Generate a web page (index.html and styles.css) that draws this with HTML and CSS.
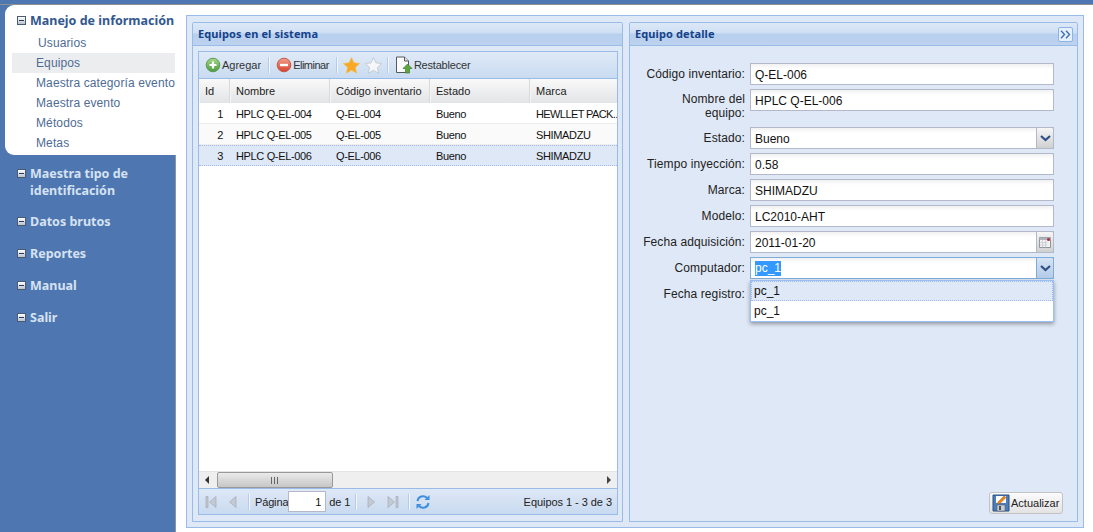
FILE: index.html
```html
<!DOCTYPE html>
<html lang="es">
<head>
    <meta charset="UTF-8">
    <title>Equipos</title>
    <link rel="stylesheet" href="styles.css">
</head>
<body>
    <div class="topbar"></div>
    <div class="app">
        <!-- Sidebar menu -->
        <nav class="sidebar">
            <div class="menu-open">
                <h3 class="menu-title dark"><span class="tree-box"></span>Manejo de información</h3>
                <a class="menu-item first">Usuarios</a>
                <a class="menu-item active">Equipos</a>
                <a class="menu-item">Maestra categoría evento</a>
                <a class="menu-item">Maestra evento</a>
                <a class="menu-item">Métodos</a>
                <a class="menu-item">Metas</a>
            </div>
            <h3 class="menu-title two-line"><span class="tree-box"></span>Maestra tipo de identificación</h3>
            <h3 class="menu-title"><span class="tree-box"></span>Datos brutos</h3>
            <h3 class="menu-title"><span class="tree-box"></span>Reportes</h3>
            <h3 class="menu-title"><span class="tree-box"></span>Manual</h3>
            <h3 class="menu-title"><span class="tree-box"></span>Salir</h3>
        </nav>

        <main class="main">
            <div class="container">
                <!-- Left: equipment grid -->
                <section class="panel panel-list">
                    <header class="panel-head">Equipos en el sistema</header>
                    <div class="panel-body">
                        <div class="grid">
                            <div class="toolbar">
                                <button class="tb-btn">
                                    <svg width="16" height="16" viewBox="0 0 16 16"><defs><linearGradient id="g1" x1="0" y1="0" x2="0" y2="1"><stop offset="0" stop-color="#a6d98c"/><stop offset="1" stop-color="#4a9a3a"/></linearGradient></defs><circle cx="8" cy="8" r="6.8" fill="url(#g1)" stroke="#5a9a58"/><path d="M8 4.500v7M4.500 8h7" stroke="#fff" stroke-width="2.200"/></svg>
                                    Agregar
                                </button>
                                <span class="tb-sep"></span>
                                <button class="tb-btn elim">
                                    <svg width="16" height="16" viewBox="0 0 16 16"><defs><linearGradient id="g2" x1="0" y1="0" x2="0" y2="1"><stop offset="0" stop-color="#f3a08c"/><stop offset="1" stop-color="#d8402c"/></linearGradient></defs><circle cx="8" cy="8" r="6.8" fill="url(#g2)" stroke="#c0584a"/><path d="M4 8h8" stroke="#fff" stroke-width="2.400"/></svg>
                                    Eliminar
                                </button>
                                <span class="tb-sep"></span>
                                <svg class="star" width="17" height="17" viewBox="0 0 16 16"><path d="M8 .5l2.300 5 5.400.6-4 3.700 1.100 5.400L8 12.500l-4.800 2.700 1.100-5.400-4-3.700 5.400-.6z" fill="#f9a825" stroke="#f2c14e" stroke-width=".6"/></svg>
                                <svg class="star" width="17" height="17" viewBox="0 0 16 16"><path d="M8 .5l2.300 5 5.400.6-4 3.700 1.100 5.400L8 12.500l-4.800 2.700 1.100-5.400-4-3.700 5.400-.6z" fill="#f4f6f8" stroke="#b9c1cc" stroke-width=".7"/></svg>
                                <span class="tb-sep"></span>
                                <button class="tb-btn reset">
                                    <svg width="18" height="18" viewBox="0 0 18 18"><path d="M1.500 1h8l4 4v11.500h-12z" fill="#fafafa" stroke="#55585c"/><path d="M9.500 1v4h4" fill="#dfe3e6" stroke="#55585c"/><path d="M12.500 8l4.500 4.500h-2.500V17h-4v-4.500H8z" fill="#5da53c" stroke="#3e7d28" stroke-width=".7"/></svg>
                                    Restablecer
                                </button>
                            </div>

                            <div class="row head">
                                <div class="cell c-id">Id</div>
                                <div class="cell c-wide">Nombre</div>
                                <div class="cell c-wide">Código inventario</div>
                                <div class="cell c-wide">Estado</div>
                                <div class="cell c-last">Marca</div>
                            </div>
                            <div class="rows">
                                <div class="row">
                                    <div class="cell c-id num">1</div>
                                    <div class="cell c-wide">HPLC Q-EL-004</div>
                                    <div class="cell c-wide">Q-EL-004</div>
                                    <div class="cell c-wide">Bueno</div>
                                    <div class="cell c-last squeeze">HEWLLET PACK..</div>
                                </div>
                                <div class="row alt">
                                    <div class="cell c-id num">2</div>
                                    <div class="cell c-wide">HPLC Q-EL-005</div>
                                    <div class="cell c-wide">Q-EL-005</div>
                                    <div class="cell c-wide">Bueno</div>
                                    <div class="cell c-last">SHIMADZU</div>
                                </div>
                                <div class="row selected">
                                    <div class="cell c-id num">3</div>
                                    <div class="cell c-wide">HPLC Q-EL-006</div>
                                    <div class="cell c-wide">Q-EL-006</div>
                                    <div class="cell c-wide">Bueno</div>
                                    <div class="cell c-last">SHIMADZU</div>
                                </div>
                            </div>

                            <div class="hscroll">
                                <span class="arrow-left"></span>
                                <div class="thumb"><span class="grip"></span></div>
                                <span class="arrow-right"></span>
                            </div>

                            <div class="pager">
                                <svg class="pg-icon" width="16" height="16" viewBox="0 0 16 16"><path d="M3 2.500h2v11H3z" fill="#c3cad3" stroke="#9aa3ad" stroke-width=".6"/><path d="M13 2.500v11L6.500 8z" fill="#c3cad3" stroke="#9aa3ad" stroke-width=".6"/></svg>
                                <svg class="pg-icon" width="16" height="16" viewBox="0 0 16 16"><path d="M11 2.500v11L4.500 8z" fill="#c3cad3" stroke="#9aa3ad" stroke-width=".6"/></svg>
                                <span class="tb-sep"></span>
                                <span class="pg-text">Página</span>
                                <input class="pg-input" value="1">
                                <span class="pg-text">de 1</span>
                                <span class="tb-sep"></span>
                                <svg class="pg-icon" width="16" height="16" viewBox="0 0 16 16"><path d="M5 2.500v11L11.500 8z" fill="#c3cad3" stroke="#9aa3ad" stroke-width=".6"/></svg>
                                <svg class="pg-icon" width="16" height="16" viewBox="0 0 16 16"><path d="M3 2.500v11L9.500 8z" fill="#c3cad3" stroke="#9aa3ad" stroke-width=".6"/><path d="M11 2.500h2v11h-2z" fill="#c3cad3" stroke="#9aa3ad" stroke-width=".6"/></svg>
                                <span class="tb-sep"></span>
                                <svg class="pg-icon" width="16" height="16" viewBox="0 0 16 16" fill="none"><path d="M2.500 7A5.500 5.500 0 0 1 12 4" stroke="#3f8fe0" stroke-width="2"/><path d="M14.500 1v5h-5z" fill="#3f8fe0"/><path d="M13.500 9A5.500 5.500 0 0 1 4 12" stroke="#3f8fe0" stroke-width="2"/><path d="M1.500 15v-5h5z" fill="#3f8fe0"/></svg>
                                <span class="pg-info">Equipos 1 - 3 de 3</span>
                            </div>
                        </div>
                    </div>
                </section>

                <!-- Right: detail form -->
                <section class="panel panel-detail">
                    <header class="panel-head">
                        Equipo detalle
                        <span class="collapse-btn"><svg width="11" height="9" viewBox="0 0 11 9" fill="none" stroke="#3f70b5" stroke-width="1.400"><path d="M1 .8l3.500 3.700L1 8.200M6 .8l3.500 3.700L6 8.200"/></svg></span>
                    </header>
                    <div class="panel-body form">
                        <div class="field"><label>Código inventario:</label><div class="input"><span>Q-EL-006</span></div></div>
                        <div class="field tall"><label>Nombre del<br>equipo:</label><div class="input"><span>HPLC Q-EL-006</span></div></div>
                        <div class="field"><label>Estado:</label><div class="input"><span>Bueno</span><i class="trigger"><svg width="11" height="7" viewBox="0 0 11 7"><path d="M1 1l4.500 4L10 1" fill="none" stroke="#2f4f86" stroke-width="2.200"/></svg></i></div></div>
                        <div class="field"><label>Tiempo inyección:</label><div class="input"><span>0.58</span></div></div>
                        <div class="field"><label>Marca:</label><div class="input"><span>SHIMADZU</span></div></div>
                        <div class="field"><label>Modelo:</label><div class="input"><span>LC2010-AHT</span></div></div>
                        <div class="field"><label>Fecha adquisición:</label><div class="input"><span>2011-01-20</span><i class="trigger"><svg width="12" height="12" viewBox="0 0 12 12"><path d="M.5 1.500h11v10H.5z" fill="#f2f2f2" stroke="#8f949b"/><path d="M.5 1.500h11v2.500H.5z" fill="#aeb4bb"/><path d="M.5 6.500h8M.5 9h8M3.500 4v7.500M6.500 4v7.500" stroke="#c4c8cd" stroke-width=".7"/><circle cx="9.500" cy="3.500" r="1.500" fill="#b5283c"/></svg></i></div></div>
                        <div class="field">
                            <label>Computador:</label>
                            <div class="input focus"><span class="sel">pc_1</span><i class="trigger on"><svg width="11" height="7" viewBox="0 0 11 7"><path d="M1 1l4.500 4L10 1" fill="none" stroke="#2f4f86" stroke-width="2.200"/></svg></i>
                                <ul class="dropdown">
                                    <li class="hover">pc_1</li>
                                    <li>pc_1</li>
                                </ul>
                            </div>
                        </div>
                        <div class="field"><label>Fecha registro:</label><div class="input"></div></div>

                        <button class="save-btn">
                            <svg width="18" height="18" viewBox="0 0 18 18"><path d="M1 1h16v16H1z" fill="#4a7cc0" stroke="#2d4f82"/><path d="M4 2h10v7H4z" fill="#fdfdfd"/><path d="M5 11h8v6H5z" fill="#c9ced4" stroke="#5b6068" stroke-width=".6"/><path d="M7 12h2v4H7z" fill="#4b5058"/><path d="M6 8l6-6 2 1.500-6 6-2.500.5z" fill="#e8861e" stroke="#a85b10" stroke-width=".5"/></svg>
                            Actualizar
                        </button>
                    </div>
                </section>
            </div>
        </main>
    </div>
</body>
</html>
```

FILE: styles.css
```css
* {
    box-sizing: border-box;
}
html, body {
    height: 100%;
}
body {
    margin: 0;
    background-color: #fff;
    font-family: 'Liberation Sans', Arial, sans-serif;
    overflow: hidden;
    display: flex;
    flex-direction: column;
}

.topbar {
    height: 5px;
    background-color: #4e77b1;
    border-bottom: 1px solid #8c8f94;
}
.app {
    flex: 1;
    display: flex;
    min-height: 0;
}

/* Sidebar */
.sidebar {
    width: 176px;
    padding-left: 5px;
    background-color: #4e77b1;
    border-right: 1px solid #8c96a3;
}
.menu-open {
    background-color: #fff;
    border-radius: 9px 0 0 9px;
    height: 150px;
    margin-right: -1px;
    margin-bottom: 10px;
    padding-top: 7px;
    position: relative;
}
.menu-title {
    margin: 0 0 15px;
    padding-left: 25px;
    position: relative;
    font-family: 'Noto Sans', Tahoma, sans-serif;
    font-size: 12.5px;
    line-height: 17px;
    font-weight: bold;
    color: #d6e2f2;
}
.menu-title.dark {
    margin: 0 0 4px;
    color: #32588f;
    white-space: nowrap;
}
.menu-title.two-line {
    margin-bottom: 14px;
}
.tree-box {
    position: absolute;
    left: 12px;
    top: 4px;
    width: 9px;
    height: 9px;
    background: linear-gradient(#fff, #b9c2cf);
    border: 1px solid #4a5a70;
}
.tree-box::after {
    content: '';
    position: absolute;
    left: 1px;
    right: 1px;
    top: 3px;
    height: 1px;
    background-color: #2d3a4d;
}
.menu-item {
    display: block;
    margin: 0 1px 0 7px;
    padding-left: 24px;
    height: 20px;
    line-height: 20px;
    font-size: 12px;
    letter-spacing: 0.12px;
    color: #4e6c94;
    white-space: nowrap;
}
.menu-item.first {
    padding-left: 26px;
}
.menu-item.active {
    background-color: #ecedef;
}

/* Main area */
.main {
    flex: 1;
    min-width: 0;
    padding: 10px 9px 4px 10px;
}
.container {
    height: 100%;
    display: flex;
    gap: 6px;
    padding: 6px 5px 5px;
    background-color: #dfe8f6;
    border: 1px solid #99bbe8;
}
.panel {
    display: flex;
    flex-direction: column;
    border: 1px solid #99bbe8;
    border-radius: 2px 2px 0 0;
}
.panel-list {
    width: 431px;
}
.panel-detail {
    flex: 1;
}
.panel-head {
    height: 23px;
    flex: none;
    position: relative;
    padding-left: 5px;
    line-height: 22px;
    font-family: 'Noto Sans', Tahoma, sans-serif;
    font-size: 11px;
    letter-spacing: 0.1px;
    font-weight: bold;
    color: #15428b;
    background: linear-gradient(#dce8f7 0, #cfdff3 45%, #b8cfee 50%, #bcd2ef 100%);
    border-bottom: 1px solid #99bbe8;
}
.panel-body {
    flex: 1;
    min-height: 0;
    padding: 5px 4px 6px 5px;
    background-color: #dfe8f6;
}
.collapse-btn {
    position: absolute;
    right: 4px;
    top: 4px;
    width: 15px;
    height: 15px;
    background-color: #e6f0fb;
    border: 1px solid #8db2e3;
    border-radius: 2px;
    display: flex;
    align-items: center;
    justify-content: center;
}

/* Grid */
.grid {
    height: 100%;
    display: flex;
    flex-direction: column;
    border: 1px solid #99bbe8;
    background-color: #fff;
    font-size: 11px;
    color: #111;
}
.toolbar {
    height: 27px;
    flex: none;
    display: flex;
    align-items: center;
    padding-left: 6px;
    background: linear-gradient(#e0eaf7, #c9dbf1);
    border-bottom: 1px solid #99bbe8;
}
.tb-btn {
    display: flex;
    align-items: center;
    gap: 1px;
    padding: 0;
    border: 0;
    background: none;
    font-family: inherit;
    font-size: 11px;
    color: #333;
}
.tb-btn.elim {
    margin-left: 1px;
    letter-spacing: -0.5px;
}
.tb-btn.reset {
    margin-left: 1px;
    letter-spacing: -0.2px;
}
.tb-sep {
    width: 2px;
    height: 16px;
    margin: 0 5px 0 7px;
    background-color: #b4ccec;
    border-right: 1px solid #f3f7fc;
    flex: none;
}
.star {
    margin-right: 5px;
}
.star + .star {
    margin-right: -2px;
}

.row {
    display: flex;
    height: 21px;
    line-height: 22px;
    border-bottom: 1px solid #ededed;
    flex: none;
    letter-spacing: -0.35px;
}
.row.alt {
    background-color: #fafafa;
}
.row.selected {
    background-color: #dfe8f6;
    line-height: 21px;
    border-top: 1px dotted #a3bae9;
    border-bottom: 1px dotted #a3bae9;
}
.row.head {
    height: 24px;
    line-height: 24px;
    background: linear-gradient(#f9f9f9, #e3e4e6);
    border-bottom: 0;
    color: #222;
    letter-spacing: 0;
}
.row.head .cell {
    border-right: 1px solid #d8d9db;
    border-left: 1px solid #f6f6f6;
    padding-left: 5px;
}
.cell {
    padding-left: 6px;
    overflow: hidden;
    white-space: nowrap;
}
.c-id {
    width: 31px;
}
.c-id.num {
    text-align: right;
    padding-right: 7px;
}
.c-wide {
    width: 100px;
}
.c-last {
    flex: 1;
    padding-right: 0;
    border-right: 0 !important;
}
.squeeze {
    letter-spacing: -0.6px;
}
.rows {
    flex: 1;
    min-height: 0;
}

.hscroll {
    height: 17px;
    flex: none;
    display: flex;
    align-items: center;
    padding: 0 6px;
    background-color: #efefef;
    border-top: 1px solid #e4e4e4;
}
.arrow-left, .arrow-right {
    width: 0;
    height: 0;
    border-top: 4px solid transparent;
    border-bottom: 4px solid transparent;
}
.arrow-left {
    border-right: 4px solid #333;
}
.arrow-right {
    border-left: 4px solid #444;
    margin-left: auto;
}
.thumb {
    width: 116px;
    height: 16px;
    margin-left: 8px;
    background: linear-gradient(#eaeaea, #c6c6c6);
    border: 1px solid #999;
    border-radius: 2px;
    display: flex;
    align-items: center;
    justify-content: center;
}
.grip {
    width: 8px;
    height: 7px;
    background: repeating-linear-gradient(90deg, #666 0 1px, transparent 1px 3px);
}

.pager {
    height: 26px;
    flex: none;
    display: flex;
    align-items: center;
    padding: 0 5px 0 4px;
    background: linear-gradient(#dee8f6, #c9daf0);
    border-top: 1px solid #99bbe8;
    color: #222;
}
.pg-icon {
    margin-right: 6px;
    flex: none;
}
.pager .tb-sep {
    margin: 0 5px 0 1px;
}
.pager .pg-text + .tb-sep {
    margin: 0 6px 0 5px;
}
.pg-text {
    letter-spacing: -0.15px;
}
.pg-input {
    width: 38px;
    height: 21px;
    margin: 0 3px 0 0;
    padding: 0 4px;
    border: 1px solid #b5b8c8;
    background-color: #fff;
    text-align: right;
    font-family: inherit;
    font-size: 11px;
    color: #111;
}
.pg-info {
    margin-left: auto;
    letter-spacing: -0.05px;
}

/* Detail form */
.form {
    padding: 17px 23px 7px 0;
    display: flex;
    flex-direction: column;
    gap: 4px;
    font-size: 12px;
}
.field {
    display: flex;
    gap: 5px;
    height: 22px;
    flex: none;
}
.field.tall {
    height: 34px;
}
.field label {
    width: 115px;
    flex: none;
    text-align: right;
    line-height: 14px;
    padding-top: 4px;
    letter-spacing: 0.1px;
    color: #222;
}
.field.tall label {
    padding-top: 3px;
}
.input {
    flex: 1;
    height: 22px;
    position: relative;
    display: flex;
    align-items: center;
    padding: 1px 0 0 4px;
    background: linear-gradient(#f1f1f1 0, #fff 5px);
    border: 1px solid #b5b8c8;
    color: #111;
}
.input.focus {
    border-color: #7eadd9;
}
.sel {
    background-color: #3399ff;
    color: #fff;
    line-height: 15px;
}
.trigger {
    position: absolute;
    right: -1px;
    top: -1px;
    width: 18px;
    height: 22px;
    display: flex;
    align-items: center;
    justify-content: center;
    background: linear-gradient(#f6f6f6, #cfd0d0);
    border: 1px solid #b5b8c8;
    border-radius: 0 2px 2px 0;
}
.trigger.on {
    background: linear-gradient(#d5e3f4, #b4cbe7);
    border-color: #7eadd9;
}
.dropdown {
    position: absolute;
    left: -1px;
    right: -1px;
    top: 22px;
    margin: 0;
    padding: 0;
    list-style: none;
    z-index: 5;
    background-color: #fff;
    border: 1px solid #98c0f4;
    box-shadow: 0 2px 4px rgba(0, 0, 0, 0.35);
}
.dropdown li {
    height: 20px;
    line-height: 20px;
    padding-left: 3px;
}
.dropdown li.hover {
    background-color: #dfe8f6;
    border: 1px dotted #a3bae9;
    line-height: 18px;
    padding-left: 2px;
}
.save-btn {
    margin-top: auto;
    margin-right: -9px;
    align-self: flex-end;
    width: 74px;
    height: 22px;
    display: flex;
    align-items: center;
    gap: 1px;
    padding: 0 0 0 2px;
    background: linear-gradient(#fbfbfb, #e3e3e3);
    border: 1px solid #c3c3c3;
    border-radius: 3px;
    font-family: inherit;
    font-size: 11px;
    color: #222;
}
```
